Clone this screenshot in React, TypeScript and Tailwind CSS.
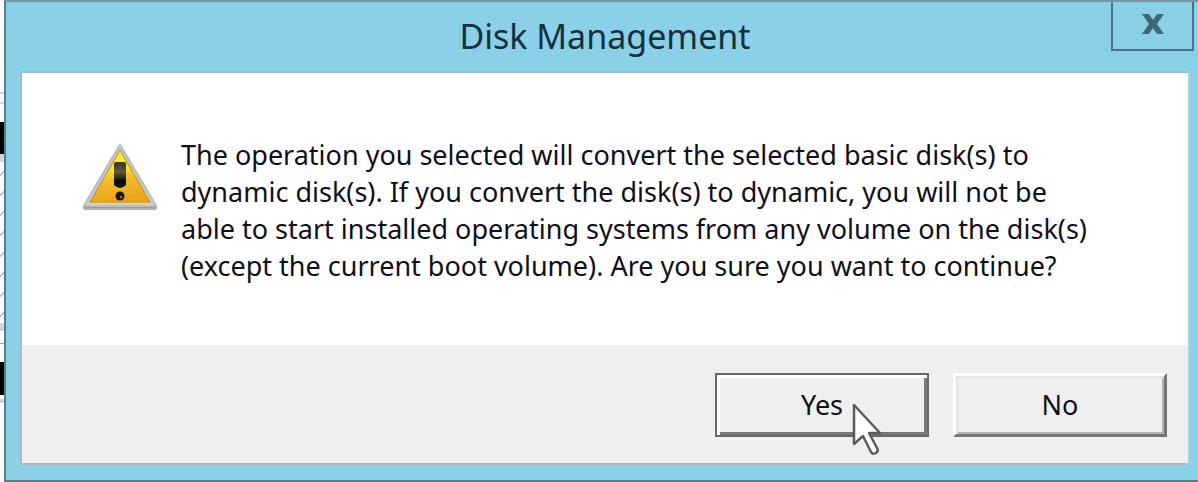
function WarningIcon() {
  return (
    <svg viewBox="0 0 80 72" className="h-[72px] w-20 shrink-0" role="img" aria-label="Warning">
      <defs>
        <linearGradient id="warn-fill" x1="0" y1="0" x2="0.2" y2="1">
          <stop offset="0" stopColor="#fbf04a" />
          <stop offset="0.45" stopColor="#f8e51e" />
          <stop offset="0.6" stopColor="#f0c02e" />
          <stop offset="1" stopColor="#eda41c" />
        </linearGradient>
        <linearGradient id="warn-mark" x1="0" y1="0" x2="0" y2="1">
          <stop offset="0" stopColor="#34343c" />
          <stop offset="0.4" stopColor="#5f5930" />
          <stop offset="0.75" stopColor="#08080c" />
          <stop offset="1" stopColor="#151515" />
        </linearGradient>
      </defs>
      <path d="M40 5 L76 66 Q77 69 74 69 H6 Q3 69 4 66 Z" fill="#9b9b9b" stroke="#b0b0b0" strokeWidth="2" strokeLinejoin="round" />
      <path d="M40 5 L75 64 Q76 66 73 66 H7 Q4 66 5 64 Z" fill="#cfcfd4" stroke="#bcbcc2" strokeWidth="2" strokeLinejoin="round" />
      <path d="M40 10 L70 62 H10 Z" fill="url(#warn-fill)" stroke="#c9a227" strokeWidth="1.5" strokeLinejoin="round" />
      <path d="M34 24 Q34 22 36 22 H44 Q46 22 46 24 V45 Q40 51 34 45 Z" fill="url(#warn-mark)" />
      <circle cx="40" cy="56" r="4.5" fill="#17171a" />
      <circle cx="41" cy="57" r="1.2" fill="#8a7a30" />
    </svg>
  );
}

function Pointer() {
  return (
    <svg viewBox="0 0 32 56" className="pointer-events-none absolute top-7 left-[135px] z-10 h-14 w-8" aria-hidden="true">
      <path
        d="M4 4 V43 L13 35 L21 51 Q23 54 26 52 Q29 50 27 47 L19 32 H30 Z"
        fill="#fff"
        stroke="#5c5c5c"
        strokeWidth="2.5"
        strokeLinejoin="round"
      />
    </svg>
  );
}

function Backdrop() {
  return (
    <div className="flex w-1 shrink-0 flex-col bg-white pt-[92px]" aria-hidden="true">
      <div className="h-3 border-y-2 border-gray-300" />
      <div className="mt-[18px] h-8 bg-black" />
      <div className="h-2 bg-gray-300" />
      <div className="flex h-[161px] flex-col justify-around">
        {Array.from({ length: 8 }, (_, i) => (
          <div key={i} className="h-1 -skew-y-45 border-b border-gray-500" />
        ))}
      </div>
      <div className="h-2 bg-gray-300" />
      <div className="mt-3 h-px bg-gray-400" />
      <div className="mt-[18px] h-[33px] bg-black" />
      <div className="mt-1 h-1 bg-gray-300" />
    </div>
  );
}

export default function App() {
  return (
    <div className="flex min-h-screen bg-white font-['Noto_Sans','Open_Sans',sans-serif] text-[#101018]">
      <Backdrop />
      <section
        role="dialog"
        aria-labelledby="dialog-title"
        aria-describedby="dialog-message"
        className="flex grow flex-col border-y-2 border-l-2 border-[#557f8e] border-t-[#7598a3] bg-[#8ad0e7] pr-2 pb-[15px] pl-[14px]"
      >
        <header className="relative flex h-[69px] items-start justify-center">
          <h1 id="dialog-title" className="text-[34px] leading-[68px] text-[#123040]">
            Disk Management
          </h1>
          <button
            type="button"
            aria-label="Close"
            className="absolute top-0 -right-1 flex h-[49px] w-[83px] items-center justify-center border-x-2 border-b-2 border-[#4a7383] pb-1"
          >
            <svg viewBox="0 0 24 20" className="h-5 w-6" aria-hidden="true">
              <path d="M1 0 H8 L12 6 L16 0 H23 L16 10 L23 20 H16 L12 14 L8 20 H1 L8 10 Z" fill="#41697a" />
            </svg>
          </button>
        </header>

        <div className="flex grow flex-col border-2 border-[#9fbccb] border-r-[#a4d4e6] bg-white">
          <main className="flex grow items-start gap-[21px] pt-[63px] pr-12 pl-[58px]">
            <div className="pt-1">
              <WarningIcon />
            </div>
            <p id="dialog-message" className="text-[27px] leading-[37px] whitespace-nowrap">
              The operation you selected will convert the selected basic disk(s) to
              <br />
              dynamic disk(s). If you convert the disk(s) to dynamic, you will not be
              <br />
              able to start installed operating systems from any volume on the disk(s)
              <br />
              (except the current boot volume). Are you sure you want to continue?
            </p>
          </main>
          <footer className="flex h-[118px] items-start justify-end gap-6 bg-[#efefef] pt-7 pr-[21px]">
            <div className="relative">
              <button
                type="button"
                className="h-16 w-[214px] border-2 border-[#686868] text-[27px] shadow-[inset_3px_3px_#fff,inset_-3px_-3px_#777]"
              >
                Yes
              </button>
              <Pointer />
            </div>
            <button
              type="button"
              className="h-16 w-[214px] border-3 border-t-white border-r-[#777] border-b-[#777] border-l-white text-[27px] shadow-[inset_2px_2px_#e4e4e4,inset_-2px_-2px_#b4b4b4]"
            >
              No
            </button>
          </footer>
        </div>
      </section>
    </div>
  );
}
